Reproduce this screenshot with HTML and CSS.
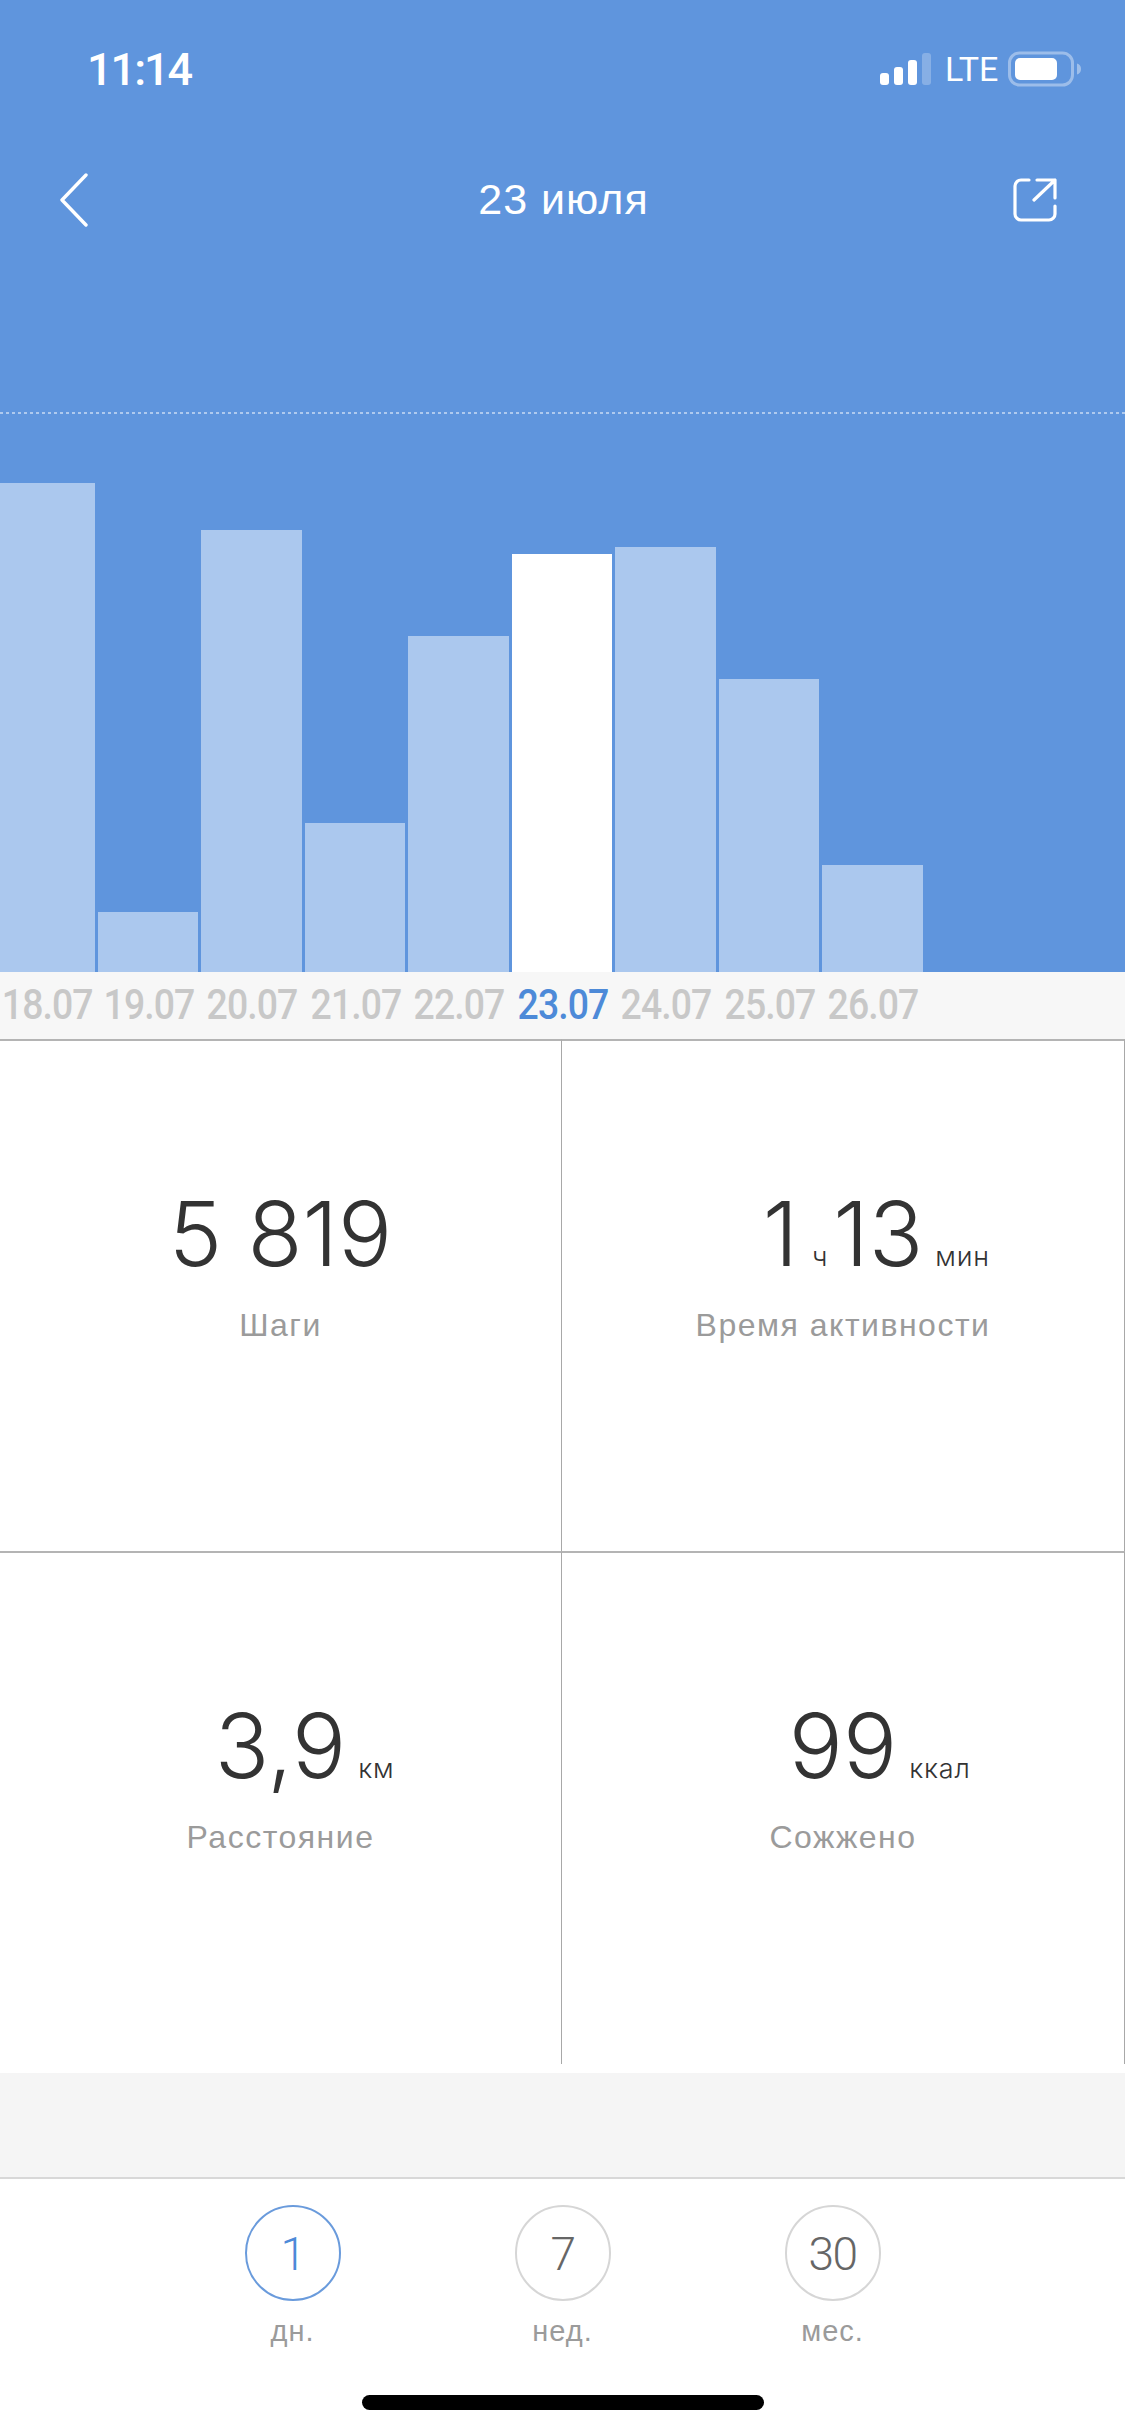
FILE: index.html
```html
<!DOCTYPE html>
<html lang="ru">
<head>
<meta charset="utf-8">
<title>23 июля</title>
<link rel="stylesheet" href="styles.css">
</head>
<body>
<div class="page">
  <header class="hero">
    <div class="status">
      <span class="time">11:14</span>
      <div class="status-right">
        <svg class="signal" width="52" height="33" viewBox="0 0 52 33"><rect x="0" y="20" width="9" height="12" rx="3" fill="#fff"/><rect x="14" y="14" width="9" height="18" rx="3" fill="#fff"/><rect x="28" y="7" width="9" height="25" rx="3" fill="#fff"/><rect x="42" y="0" width="9" height="32" rx="3" fill="#fff" fill-opacity=".25"/></svg>
        <span class="lte">LTE</span>
        <svg class="battery" width="74" height="36" viewBox="0 0 74 36"><rect x="1.5" y="2" width="63" height="32" rx="10" fill="none" stroke="#fff" stroke-opacity=".38" stroke-width="3"/><rect x="7" y="7" width="42" height="22" rx="5" fill="#fff"/><path d="M69 12.5c2.600.6 4 2.800 4 5.500s-1.400 4.900-4 5.500z" fill="#fff" fill-opacity=".4"/></svg>
      </div>
    </div>
    <nav class="nav">
      <svg class="back" width="30" height="54" viewBox="0 0 30 54"><path d="M27 2 3 27l24 25" fill="none" stroke="#fff" stroke-width="3.400" stroke-linecap="round" stroke-linejoin="round"/></svg>
      <h1 class="title">23 июля</h1>
      <svg class="share" width="44" height="44" viewBox="0 0 44 44"><path d="M16 2H8a6 6 0 0 0-6 6v28a6 6 0 0 0 6 6h28a6 6 0 0 0 6-6v-8" fill="none" stroke="#fff" stroke-width="3.200" stroke-linecap="round"/><path d="M24 2h18v18M42 2 21 22" fill="none" stroke="#fff" stroke-width="3.200" stroke-linecap="round" stroke-linejoin="round"/></svg>
    </nav>
    <div class="chart">
      <div class="goal"></div>
      <div class="bar" style="height:489px"></div>
      <div class="bar" style="height:60px"></div>
      <div class="bar" style="height:442px"></div>
      <div class="bar" style="height:149px"></div>
      <div class="bar" style="height:336px"></div>
      <div class="bar bar-on" style="height:418px"></div>
      <div class="bar" style="height:425px"></div>
      <div class="bar" style="height:293px"></div>
      <div class="bar" style="height:107px"></div>
    </div>
  </header>
  <div class="dates">
    <span>18.07</span><span>19.07</span><span>20.07</span><span>21.07</span><span>22.07</span><span class="date-on">23.07</span><span>24.07</span><span>25.07</span><span>26.07</span>
  </div>
  <section class="stats">
    <div class="cell">
      <div class="num"><span class="big">5 819</span></div>
      <div class="label">Шаги</div>
    </div>
    <div class="cell">
      <div class="num"><span class="big">1</span><span class="unit unit-mid">ч</span><span class="big">13</span><span class="unit unit-end">мин</span></div>
      <div class="label">Время активности</div>
    </div>
    <div class="cell">
      <div class="num"><span class="big">3,9</span><span class="unit unit-end">км</span></div>
      <div class="label">Расстояние</div>
    </div>
    <div class="cell">
      <div class="num"><span class="big">99</span><span class="unit unit-end">ккал</span></div>
      <div class="label">Сожжено</div>
    </div>
  </section>
  <div class="band"></div>
  <footer class="tabs">
    <div class="tab tab-on"><div class="circle">1</div><div class="tab-label">дн.</div></div>
    <div class="tab"><div class="circle">7</div><div class="tab-label">нед.</div></div>
    <div class="tab"><div class="circle">30</div><div class="tab-label">мес.</div></div>
  </footer>
  <div class="home-wrap"><div class="home"></div></div>
</div>
</body>
</html>
```
FILE: styles.css
```css
* { box-sizing: border-box; margin: 0; padding: 0; }
html, body { width: 1125px; height: 2436px; overflow: hidden; background: #fff; }
body { font-family: "Liberation Sans", Arial, sans-serif; }
.page { width: 1125px; height: 2436px; display: flex; flex-direction: column; overflow: hidden; }

.hero { height: 972px; background: #5f95dd; display: flex; flex-direction: column; color: #fff; }
.status { height: 138px; display: flex; justify-content: space-between; align-items: center; padding: 0 43px 0 87px; }
.time { font-family: Roboto, sans-serif; font-size: 45px; font-weight: 500; letter-spacing: -2px; }
.status-right { display: flex; align-items: center; }
.signal { margin-right: 13px; }
.lte { font-family: Roboto, sans-serif; font-size: 34px; width: 63px; letter-spacing: 0; }
.nav { height: 124px; display: grid; grid-template-columns: 1fr auto 1fr; align-items: center; padding: 0 68px 0 59px; }
.share { justify-self: end; }
.title { font-size: 43px; font-weight: 400; letter-spacing: 1px; padding: 0 0 2px 11px; }
.chart { position: relative; height: 710px; display: flex; align-items: flex-end; gap: 3px; margin-left: -6px; }
.goal { position: absolute; left: 6px; top: 150px; width: 1125px; height: 2px; background: repeating-linear-gradient(90deg, rgba(255,255,255,.5) 0 3px, transparent 3px 6px); }
.bar { width: 100.500px; background: #abc8ee; flex: none; }
.bar-on { background: #fff; }

.dates { height: 67px; background: #f7f7f7; display: flex; gap: 3px; padding-top: 8px; }
.dates span { width: 100.500px; flex: none; text-align: center; font-family: Roboto, sans-serif; font-size: 42px; font-weight: 500; line-height: 50px; letter-spacing: -1px; color: #c8c8c8; transform: scaleX(.89); }
.dates span:first-child { margin-right: -6px; text-align: left; transform-origin: left center; text-indent: 2px; }
.dates .date-on { color: #4d8ad8; }

.stats { display: grid; grid-template-columns: 562px 563px; }
.cell { height: 512px; border-top: 2px solid #b4b4b4; border-right: 1px solid #a8a8a8; padding-top: 143px; }
.cell:nth-child(n+3) { height: 513px; }
.num { position: relative; height: 100px; display: flex; justify-content: center; align-items: baseline; line-height: 100px; color: #333; }
.big { font-family: Inter, sans-serif; font-size: 90px; font-weight: 300; }
.unit { font-family: Inter, sans-serif; font-size: 27px; font-weight: 300; line-height: 30px; letter-spacing: .8px; }
.unit-mid { margin: 0 5px 0 14px; }
.unit-end { position: relative; width: 0; white-space: nowrap; left: 12px; }
.label { margin-top: 21px; text-align: center; font-size: 32px; line-height: 40px; color: #9b9b9b; letter-spacing: 1.500px; }

.band { height: 106px; margin-top: 9px; background: #f5f5f5; border-bottom: 2px solid #d8d8d8; }
.tabs { display: flex; justify-content: center; gap: 174px; padding-top: 26px; }
.tab { width: 96px; display: flex; flex-direction: column; align-items: center; }
.circle { width: 96px; height: 96px; border-radius: 50%; border: 2px solid #d6d6d6; display: flex; align-items: center; justify-content: center; font-family: Roboto, sans-serif; font-size: 46px; font-weight: 300; letter-spacing: -1.500px; color: #666; padding-top: 2px; }
.tab-label { margin-top: 10px; font-size: 29px; line-height: 40px; color: #9b9b9b; letter-spacing: 1px; white-space: nowrap; }
.tab-on .circle { border-color: #6a9bdc; color: #4d8ad8; }
.home-wrap { display: flex; justify-content: center; padding-top: 44px; }
.home { width: 402px; height: 15px; border-radius: 8px; background: #000; }
```
